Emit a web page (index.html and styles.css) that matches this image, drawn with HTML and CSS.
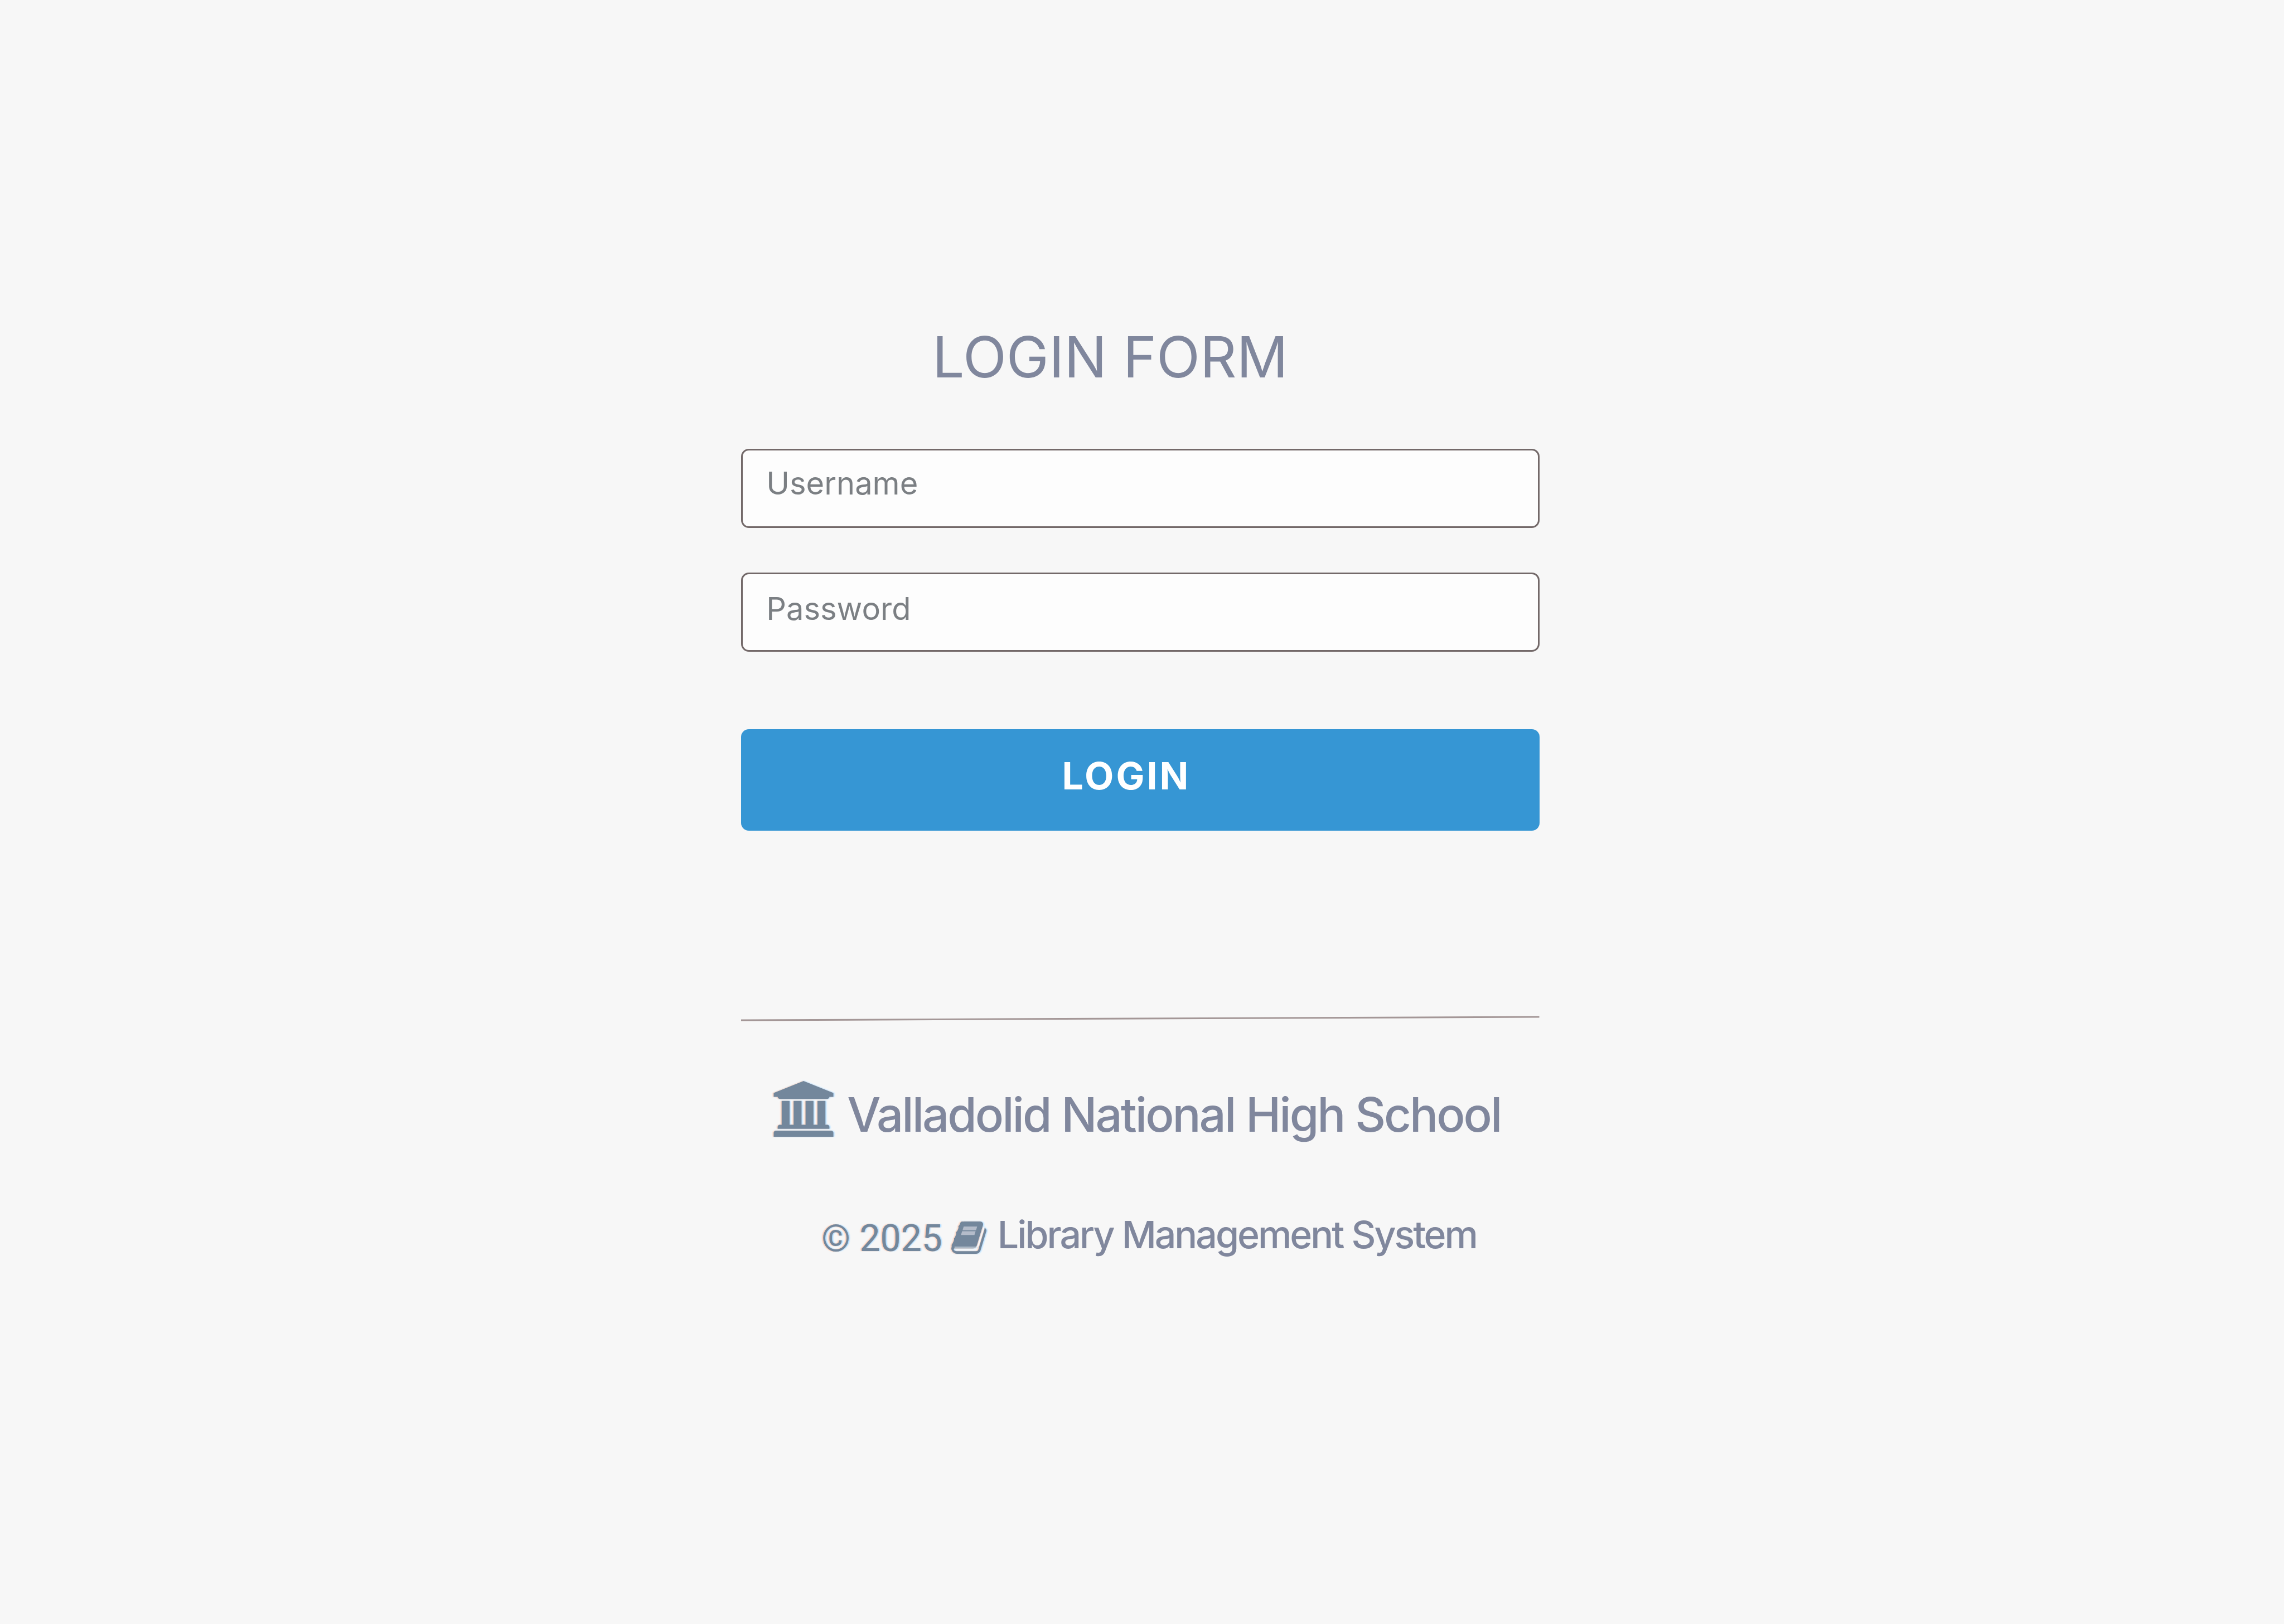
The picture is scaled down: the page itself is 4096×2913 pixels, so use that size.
FILE: index.html
```html
<!DOCTYPE html>
<html lang="en">
<head>
<meta charset="utf-8">
<title>Login Form</title>
<link rel="stylesheet" href="styles.css">
</head>
<body>
<main class="login">
  <form class="login-form">
    <h1 class="title">LOGIN FORM</h1>
    <input class="field" type="text" placeholder="Username" aria-label="Username">
    <input class="field field-password" type="password" placeholder="Password" aria-label="Password">
    <button class="submit" type="button">LOGIN</button>
  </form>
  <svg class="divider" viewBox="0 0 1434 10" preserveAspectRatio="none" aria-hidden="true">
    <line x1="0" y1="8" x2="1434" y2="2" stroke="#a49797" stroke-width="3"/>
  </svg>
  <footer class="footer">
    <h2 class="school">
      <svg class="icon-school" viewBox="0 0 1920 1792" aria-hidden="true"><path d="M960 0l960 384v128h-128q0 26-20.5 45t-48.5 19h-1526q-28 0-48.5-19t-20.5-45h-128v-128zm-704 640h256v768h128v-768h256v768h128v-768h256v768h128v-768h256v768h59q28 0 48.5 19t20.5 45v64h-1664v-64q0-26 20.5-45t48.5-19h59v-768zm1595 960q28 0 48.5 19t20.5 45v128h-1920v-128q0-26 20.5-45t48.5-19h1782z"/></svg>
      <span class="tracked">Valladolid National High School</span>
    </h2>
    <p class="system">
      <span class="copyright">© 2025</span>
      <svg class="icon-book" viewBox="62 128 1667 1536" aria-hidden="true"><path d="M1703 478q40 57 18 129l-275 906q-19 64-76.5 107.5t-122.5 43.5h-923q-77 0-148.5-53.5t-99.5-131.5q-24-67-2-127 0-4 3-27t4-37q1-8-3-21.5t-3-19.5q2-11 8-21t16.5-23.5 16.5-23.5q23-38 45-91.5t30-91.5q3-10 .5-30t-.5-28q3-11 17-28t17-23q21-36 42-92t25-90q1-9-2.5-32t.5-28q4-13 22-30.5t22-22.5q19-26 42.5-84.5t27.5-96.5q1-8-3-25.5t-2-26.5q2-8 9-18t18-23 17-21q8-12 16.5-30.5t15-35 16-36 19.5-32 26.5-23.5 36-11.5 47.5 5.5l-1 3q38-9 51-9h761q74 0 114 56t18 130l-274 906q-36 119-71.5 153.5t-128.5 34.5h-869q-27 0-38 15-11 16-1 43 24 70 144 70h923q29 0 56-15.5t35-41.5l300-987q7-22 5-57 38 15 59 43z"/><path class="book-pages" d="M215 1360h1010q110 0 150-100l265-860-50-20-285 900q-20 50-90 50h-1000z"/><path class="book-label" d="M650 365h640l-54 180h-640zM575 590h640l-54 180h-640z"/></svg>
      <span class="tracked">Library Management System</span>
    </p>
  </footer>
</main>
</body>
</html>
```
FILE: styles.css
```css
* {
  box-sizing: border-box;
}

body {
  margin: 0;
  min-height: 100vh;
  padding: 580px 6px 0 0;
  background: #f7f7f7;
  color: #80879d;
  font-family: Inter, "Liberation Sans", sans-serif;
}

.login {
  width: 35%;
  margin: 0 auto;
}

.login-form {
  display: flex;
  flex-direction: column;
}

.title {
  margin: 0 0 105px;
  padding-right: 108px;
  font-size: 102px;
  font-weight: 400;
  line-height: 120px;
  text-align: center;
}

.field {
  width: 100%;
  height: 142px;
  margin: 0 0 80px;
  padding: 0 42px 18px;
  border: 3px solid #736969;
  border-radius: 14px;
  background: #fdfdfd;
  color: #7b7f83;
  font: 400 56px Inter, "Liberation Sans", sans-serif;
}

.field-password {
  margin-bottom: 139px;
  padding-bottom: 12px;
}

.field::placeholder {
  color: #7b7f83;
  opacity: 1;
}

.submit {
  height: 182px;
  padding: 0 50px 16px 0;
  border: 0;
  border-radius: 14px;
  background: #3696d4;
  color: #fff;
  font: 700 68px Inter, "Liberation Sans", sans-serif;
  letter-spacing: 4px;
  text-align: center;
}

.divider {
  display: block;
  width: 100%;
  height: 10px;
  margin-top: 332px;
}

.footer {
  padding-top: 107px;
}

.school,
.system {
  display: flex;
  align-items: flex-start;
  margin: 0;
  font-weight: 500;
  white-space: nowrap;
}

.school {
  gap: 24px;
  padding-left: 58px;
  font-size: 85px;
  line-height: 122px;
}

.system {
  gap: 16px;
  padding: 112px 0 0 144px;
  font-size: 68px;
  line-height: 82px;
}

.tracked {
  letter-spacing: -3px;
}

.copyright {
  padding-top: 8px;
  color: #73879c;
  font-family: Roboto, sans-serif;
  font-size: 66px;
  font-weight: 400;
  text-shadow: -2px 0 2px #ffc8ac, 2px 0 2px #a6d8ff, 0 0 5px #fff;
}

.icon-school,
.icon-book {
  flex: none;
  fill: #73879c;
  filter: drop-shadow(-2px 0 1px #ffd5bf) drop-shadow(2px 0 1px #b5deff) drop-shadow(0 0 2px #fff);
}

.icon-school {
  width: 108px;
  height: 100px;
}

.icon-book {
  width: 63px;
  height: 58px;
  margin: 18px 4px 0 0;
}

.book-pages {
  fill: #f7f9fc;
}

.book-label {
  fill: #b4bcca;
}
```
